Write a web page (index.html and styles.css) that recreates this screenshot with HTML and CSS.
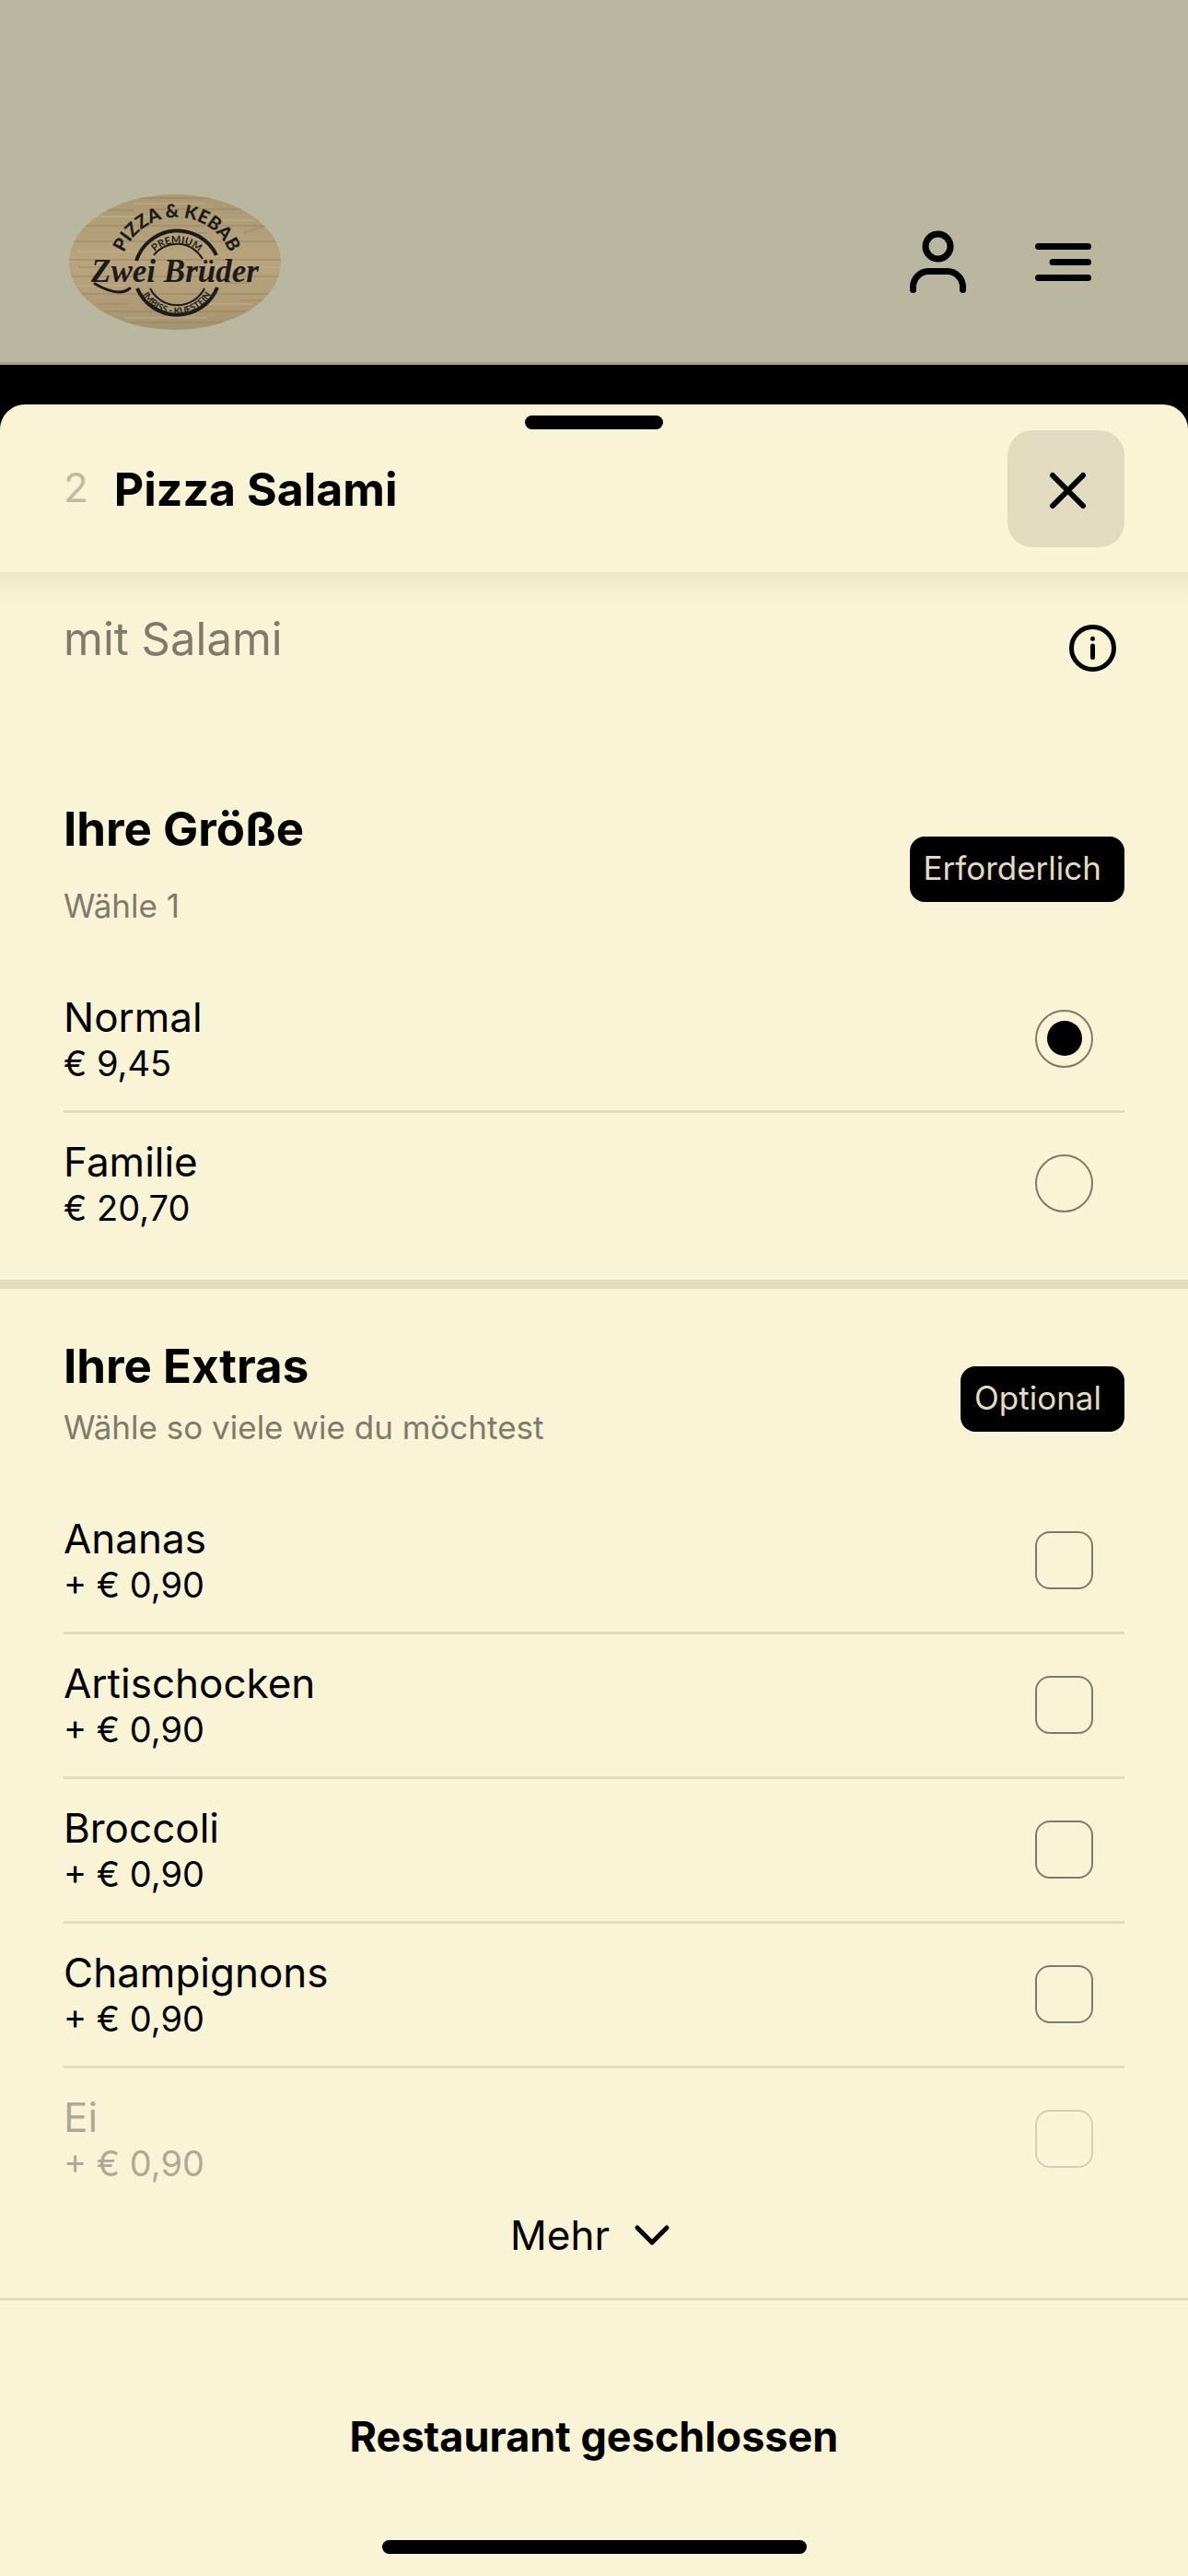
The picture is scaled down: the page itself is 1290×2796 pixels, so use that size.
FILE: index.html
```html
<!DOCTYPE html>
<html lang="de">
<head>
<meta charset="utf-8">
<meta name="viewport" content="width=device-width, initial-scale=1">
<title>Pizza Salami – Zwei Brüder</title>
<link rel="stylesheet" href="styles.css">
</head>
<body>
<header class="site-header">
  <a class="logo" href="#" aria-label="Zwei Brüder">
    <svg width="230" height="147" viewBox="0 0 230 147">
      <defs>
        <linearGradient id="wood" x1="0" y1="0" x2="0" y2="1">
          <stop offset="0" stop-color="#ab9973"/>
          <stop offset=".3" stop-color="#b3a07a"/>
          <stop offset=".5" stop-color="#b9a57e"/>
          <stop offset=".75" stop-color="#b19e79"/>
          <stop offset="1" stop-color="#a59370"/>
        </linearGradient>
        <clipPath id="oval"><ellipse cx="115" cy="73.5" rx="115" ry="73.5"/></clipPath>
        <path id="arc-top" d="M56 98A62 62 0 1 1 178 98"/>
        <path id="arc-premium" d="M82 88A35 35 0 0 1 152 88"/>
        <path id="arc-bottom" d="M74 87A43 43 0 0 0 160 87"/>
      </defs>
      <g clip-path="url(#oval)">
        <rect width="230" height="147" fill="url(#wood)"/>
        <g stroke="#8a7757" stroke-width="1" opacity=".6">
          <path d="M0 4H230M0 17H70M90 16H230M0 34H230M0 51H230M0 71H230M0 89H230M0 108H230M0 127H230M0 139H230"/>
        </g>
        <g stroke="#c9b68f" stroke-width="2" opacity=".4">
          <path d="M20 24H90M140 28H200M8 62H80M150 79H225M10 99H60M120 119H200M60 134H150M70 10H150"/>
        </g>
        <g stroke="#94815f" stroke-width="2" opacity=".4">
          <path d="M120 42H150M190 42L225 30M10 79H36M185 115H210M30 119H64M170 96H196"/>
        </g>
      </g>
      <g fill="none" stroke="#1d1b19">
        <path stroke-width="4" d="M73 72A47 47 0 0 1 160 66M74 102A47 47 0 0 0 161 101"/>
        <path stroke-width="2" d="M92 66A32 32 0 0 1 145 70M88 102A33 33 0 0 0 147 102"/>
        <path stroke-width="3" stroke-linecap="round" d="M28 97C40 104 56 110 66 102"/>
      </g>
      <g class="logo-text">
        <text class="logo-arc"><textPath href="#arc-top" startOffset="50%">PIZZA &amp; KEBAB</textPath></text>
        <text class="logo-premium"><textPath href="#arc-premium" startOffset="50%">PREMIUM</textPath></text>
        <text class="logo-imbiss"><textPath href="#arc-bottom" startOffset="50%">IMBISS - KUFSTEIN</textPath></text>
        <text class="logo-name" x="115" y="95">Zwei Brüder</text>
      </g>
    </svg>
  </a>
  <nav class="header-actions">
    <button class="icon-button" type="button" aria-label="Konto">
      <svg width="62" height="70" viewBox="0 0 62 70" fill="none" stroke="#000" stroke-width="7" stroke-linecap="round">
        <circle cx="30.500" cy="17.500" r="13.500"/>
        <path d="M3.500 64.500V61A17 17 0 0 1 20 44.500H41A17 17 0 0 1 57.500 61V64.500"/>
      </svg>
    </button>
    <button class="icon-button" type="button" aria-label="Menü">
      <svg width="62" height="70" viewBox="0 0 62 70" fill="none" stroke="#000" stroke-width="7" stroke-linecap="round">
        <path d="M3.500 17.500H57.500M19 34.500H57.500M3.500 51.500H57.500"/>
      </svg>
    </button>
  </nav>
</header>

<main class="sheet">
  <div class="sheet-header">
    <span class="handle"></span>
    <span class="item-number">2</span>
    <h1 class="title">Pizza Salami</h1>
    <button class="close" type="button" aria-label="Schließen">
      <svg width="44" height="44" viewBox="0 0 44 44" stroke="#000" stroke-width="6" stroke-linecap="round"><path d="M7 7L40 40M40 7L7 40"/></svg>
    </button>
  </div>

  <section class="description">
    <p class="description-text">mit Salami</p>
    <button class="info" type="button" aria-label="Information">
      <svg width="51" height="51" viewBox="0 0 51 51" fill="none" stroke="#000" stroke-width="5" stroke-linecap="round">
        <circle cx="25.500" cy="25.500" r="23"/>
        <path d="M25.500 23V35.500M25.500 15.200V15.300"/>
      </svg>
    </button>
  </section>

  <section class="group">
    <div class="group-head">
      <div class="group-titles spaced">
        <h2 class="heading">Ihre Größe</h2>
        <p class="hint">Wähle 1</p>
      </div>
      <span class="badge">Erforderlich</span>
    </div>
    <div class="options">
      <label class="option"><span class="option-text"><span class="name">Normal</span><span class="price">€ 9,45</span></span><input class="radio" type="radio" name="size" checked></label>
      <label class="option"><span class="option-text"><span class="name">Familie</span><span class="price">€ 20,70</span></span><input class="radio" type="radio" name="size"></label>
    </div>
  </section>

  <section class="group extras">
    <div class="group-head">
      <div class="group-titles">
        <h2 class="heading">Ihre Extras</h2>
        <p class="hint">Wähle so viele wie du möchtest</p>
      </div>
      <span class="badge">Optional</span>
    </div>
    <div class="options">
      <label class="option"><span class="option-text"><span class="name">Ananas</span><span class="price">+ € 0,90</span></span><input class="check" type="checkbox"></label>
      <label class="option"><span class="option-text"><span class="name">Artischocken</span><span class="price">+ € 0,90</span></span><input class="check" type="checkbox"></label>
      <label class="option"><span class="option-text"><span class="name">Broccoli</span><span class="price">+ € 0,90</span></span><input class="check" type="checkbox"></label>
      <label class="option"><span class="option-text"><span class="name">Champignons</span><span class="price">+ € 0,90</span></span><input class="check" type="checkbox"></label>
      <label class="option faded"><span class="option-text"><span class="name">Ei</span><span class="price">+ € 0,90</span></span><input class="check" type="checkbox"></label>
    </div>
    <button class="more" type="button">Mehr
      <svg width="40" height="24" viewBox="0 0 40 24" fill="none" stroke="#000" stroke-width="5" stroke-linecap="round" stroke-linejoin="round"><path d="M4 4L20 20L36 4"/></svg>
    </button>
  </section>

  <footer class="footer">
    <p class="status">Restaurant geschlossen</p>
    <span class="home-indicator"></span>
  </footer>
</main>
</body>
</html>
```
FILE: styles.css
```css
:root {
  --cream: #faf4d7;
  --line: #e1dcbf;
  --muted: #7f7b6b;
  --pale: #c0baa3;
}

* {
  box-sizing: border-box;
}

body {
  margin: 0;
  min-height: 100vh;
  display: flex;
  flex-direction: column;
  background: #000;
  color: #000;
  font-family: Inter, "Liberation Sans", sans-serif;
}

h1, h2, p {
  margin: 0;
}

button {
  padding: 0;
  border: 0;
  background: none;
  color: inherit;
  font: inherit;
  cursor: pointer;
}

svg {
  display: block;
}

/* Site header */
.site-header {
  display: flex;
  justify-content: space-between;
  align-items: center;
  margin-bottom: 43px;
  padding: 211px 104px 35px 75px;
  border-bottom: 3px solid #a3a089;
  background: #bab7a0;
}

.header-actions {
  display: flex;
  gap: 74px;
}

.logo-text {
  fill: #1d1b19;
  font-family: Lato, sans-serif;
  font-weight: 700;
  text-anchor: middle;
}

.logo-arc {
  font-size: 20px;
  font-weight: 900;
}

.logo-premium { font-size: 11px; }
.logo-imbiss { font-size: 10px; }

.logo-name {
  font-family: "Liberation Serif", serif;
  font-style: italic;
  font-size: 35px;
}

/* Bottom sheet */
.sheet {
  flex: 1;
  display: flex;
  flex-direction: column;
  border-radius: 27px 27px 0 0;
  background: var(--cream);
}

.sheet-header {
  position: relative;
  display: flex;
  align-items: center;
  gap: 28px;
  padding: 28px 69px 27px;
}

.sheet-header::after {
  content: "";
  position: absolute;
  top: 100%;
  left: 0;
  right: 0;
  height: 36px;
  background: linear-gradient(#ede7ca, var(--cream));
}

.handle {
  position: absolute;
  top: 12px;
  left: 50%;
  width: 150px;
  height: 15px;
  border-radius: 8px;
  background: #000;
  transform: translateX(-50%);
}

.item-number {
  padding-bottom: 4px;
  color: var(--pale);
  font-size: 44px;
}

.title {
  flex: 1;
  font-size: 50px;
  font-weight: 700;
  line-height: 60px;
}

.close {
  display: grid;
  place-items: center;
  width: 127px;
  height: 127px;
  border-radius: 27px;
  background: var(--line);
}

.description {
  display: flex;
  justify-content: space-between;
  align-items: flex-start;
  padding: 43px 78px 87px 69px;
}

.description-text {
  color: var(--muted);
  font-size: 49px;
  line-height: 60px;
}

.info {
  padding-top: 14px;
}

/* Option groups */
.group {
  padding: 54px 69px 27px;
}

.group-head {
  display: flex;
  justify-content: space-between;
  align-items: center;
}

.group-titles {
  display: flex;
  flex-direction: column;
  gap: 12px;
  padding-bottom: 10px;
}

.group-titles.spaced {
  gap: 29px;
}

.heading {
  font-size: 51px;
  font-weight: 700;
  line-height: 60px;
}

.hint {
  color: var(--muted);
  font-size: 35px;
  line-height: 48px;
}

.badge {
  padding: 10px 25px 13px 15px;
  border-radius: 16px;
  background: #000;
  color: var(--line);
  font-size: 35px;
  line-height: 48px;
}

.options {
  padding-top: 34px;
}

.option {
  display: flex;
  justify-content: space-between;
  align-items: center;
  padding: 26px 34px 28px 0;
  border-bottom: 3px solid var(--line);
}

.option:last-child {
  border-bottom: 0;
}

.option-text {
  display: flex;
  flex-direction: column;
}

.name {
  font-size: 44px;
  line-height: 54px;
}

.price {
  font-size: 38px;
  line-height: 46px;
}

.radio,
.check {
  display: grid;
  place-items: center;
  width: 63px;
  height: 63px;
  margin: 0;
  border: 2px solid var(--muted);
  appearance: none;
}

.radio {
  border-radius: 50%;
}

.check {
  border-radius: 16px;
}

.radio:checked::before {
  content: "";
  width: 38px;
  height: 38px;
  border-radius: 50%;
  background: #000;
}

.check:checked {
  background: #000;
}

.faded {
  opacity: .3;
}

.extras {
  padding-bottom: 41px;
  border-top: 10px solid var(--line);
}

.more {
  display: flex;
  align-items: center;
  gap: 26px;
  margin: 0 auto;
  padding-right: 8px;
  font-size: 44px;
  line-height: 54px;
}

/* Footer */
.footer {
  flex: 1;
  display: flex;
  flex-direction: column;
  justify-content: space-between;
  align-items: center;
  padding: 118px 0 24px;
  border-top: 3px solid var(--line);
}

.status {
  font-size: 45px;
  font-weight: 700;
  line-height: 60px;
}

.home-indicator {
  width: 461px;
  max-width: 60%;
  height: 15px;
  border-radius: 8px;
  background: #000;
}
```
